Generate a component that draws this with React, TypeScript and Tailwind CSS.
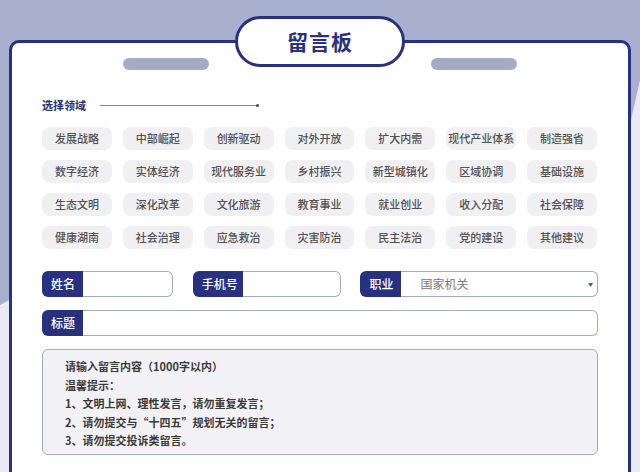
import React from 'react';

const areas = [
    '发展战略', '中部崛起', '创新驱动', '对外开放', '扩大内需', '现代产业体系', '制造强省',
    '数字经济', '实体经济', '现代服务业', '乡村振兴', '新型城镇化', '区域协调', '基础设施',
    '生态文明', '深化改革', '文化旅游', '教育事业', '就业创业', '收入分配', '社会保障',
    '健康湖南', '社会治理', '应急救治', '灾害防治', '民主法治', '党的建设', '其他建议',
];

const tips = [
    '请输入留言内容（1000字以内）',
    '温馨提示：',
    '1、文明上网、理性发言，请勿重复发言；',
    '2、请勿提交与“十四五”规划无关的留言；',
    '3、请勿提交投诉类留言。',
];

const Field: React.FC<{ label: string; width: string; labelWidth: string; children?: React.ReactNode }> = ({ label, width, labelWidth, children }) => (
    <div className={`flex h-[26px] ${width}`}>
        <div className={`${labelWidth} shrink-0 bg-[#28317f] rounded-l-[6px] flex items-center pl-[9px] text-white text-[12px] font-medium`}>
            {label}
        </div>
        <div className="flex-1 bg-white border-[1.5px] border-l-0 border-[#a6a9c3] rounded-r-[6px] flex items-center">
            {children}
        </div>
    </div>
);

const App: React.FC = () => {
    return (
        <div className="relative w-[640px] h-[472px] overflow-hidden bg-[#eaeaf5] font-['Microsoft_YaHei','Noto_Sans_CJK_SC',sans-serif]">
            {/* background shape */}
            <svg className="absolute inset-0" width="640" height="472" viewBox="0 0 640 472">
                <polygon points="0,0 640,0 640,80 631,120 9,300 0,305" fill="#a9b0cd" />
            </svg>

            <div className="relative pt-[40px] px-[9px]">
                <div className="h-[460px] bg-white border-[3px] border-[#28317f] rounded-[10px]">
                    {/* header */}
                    <div className="flex justify-center items-start -mt-[27px]">
                        <div className="w-[86px] h-[12px] mt-[42px] rounded-full bg-[#a4abc7]" />
                        <div className="w-[170px] h-[51px] mx-[26px] bg-white border-[3px] border-[#28317f] rounded-full flex items-center justify-center">
                            <span className="text-[21px] font-bold text-[#2a3280] tracking-[1px]">留言板</span>
                        </div>
                        <div className="w-[86px] h-[12px] mt-[42px] rounded-full bg-[#a4abc7]" />
                    </div>

                    <div className="px-[30px]">
                        {/* section title */}
                        <div className="flex items-center h-[16px] mt-[27px]">
                            <span className="text-[11px] font-bold text-[#2b3070]">选择领域</span>
                            <div className="ml-[14px] w-[158px] h-px bg-[#7d84b2]" />
                            <div className="w-[3px] h-[3px] -ml-[2px] rounded-full bg-[#3a4186]" />
                        </div>

                        {/* tags */}
                        <div className="grid grid-cols-7 gap-x-[11px] gap-y-[10px] mt-[14px] pr-px">
                            {areas.map(a => (
                                <div key={a} className="h-[23px] rounded-[8px] bg-[#f0f0f2] flex items-center justify-center whitespace-nowrap text-[11px] font-medium text-[#505050]">
                                    {a}
                                </div>
                            ))}
                        </div>

                        {/* form */}
                        <div className="flex gap-[20px] mt-[22px]">
                            <Field label="姓名" width="w-[131px]" labelWidth="w-[41px]" />
                            <Field label="手机号" width="w-[149px]" labelWidth="w-[50px]" />
                            <Field label="职业" width="w-[238px] -ml-px" labelWidth="w-[41px]">
                                <span className="ml-[19px] text-[12px] text-[#777]">国家机关</span>
                                <span className="ml-auto mr-[4px] text-[5px] text-[#555]">▼</span>
                            </Field>
                        </div>
                        <div className="mt-[13px]">
                            <Field label="标题" width="w-full" labelWidth="w-[41px]" />
                        </div>

                        <div className="mt-[13px] h-[106px] bg-[#f2f2f6] border-[1.5px] border-[#a6a9c3] rounded-[6px] pl-[22px] pt-[7px]">
                            {tips.map(t => (
                                <div key={t} className="text-[11px] leading-[18.5px] font-semibold text-[#3a3a3a]">{t}</div>
                            ))}
                        </div>
                    </div>
                </div>
            </div>
        </div>
    );
};

export default App;
